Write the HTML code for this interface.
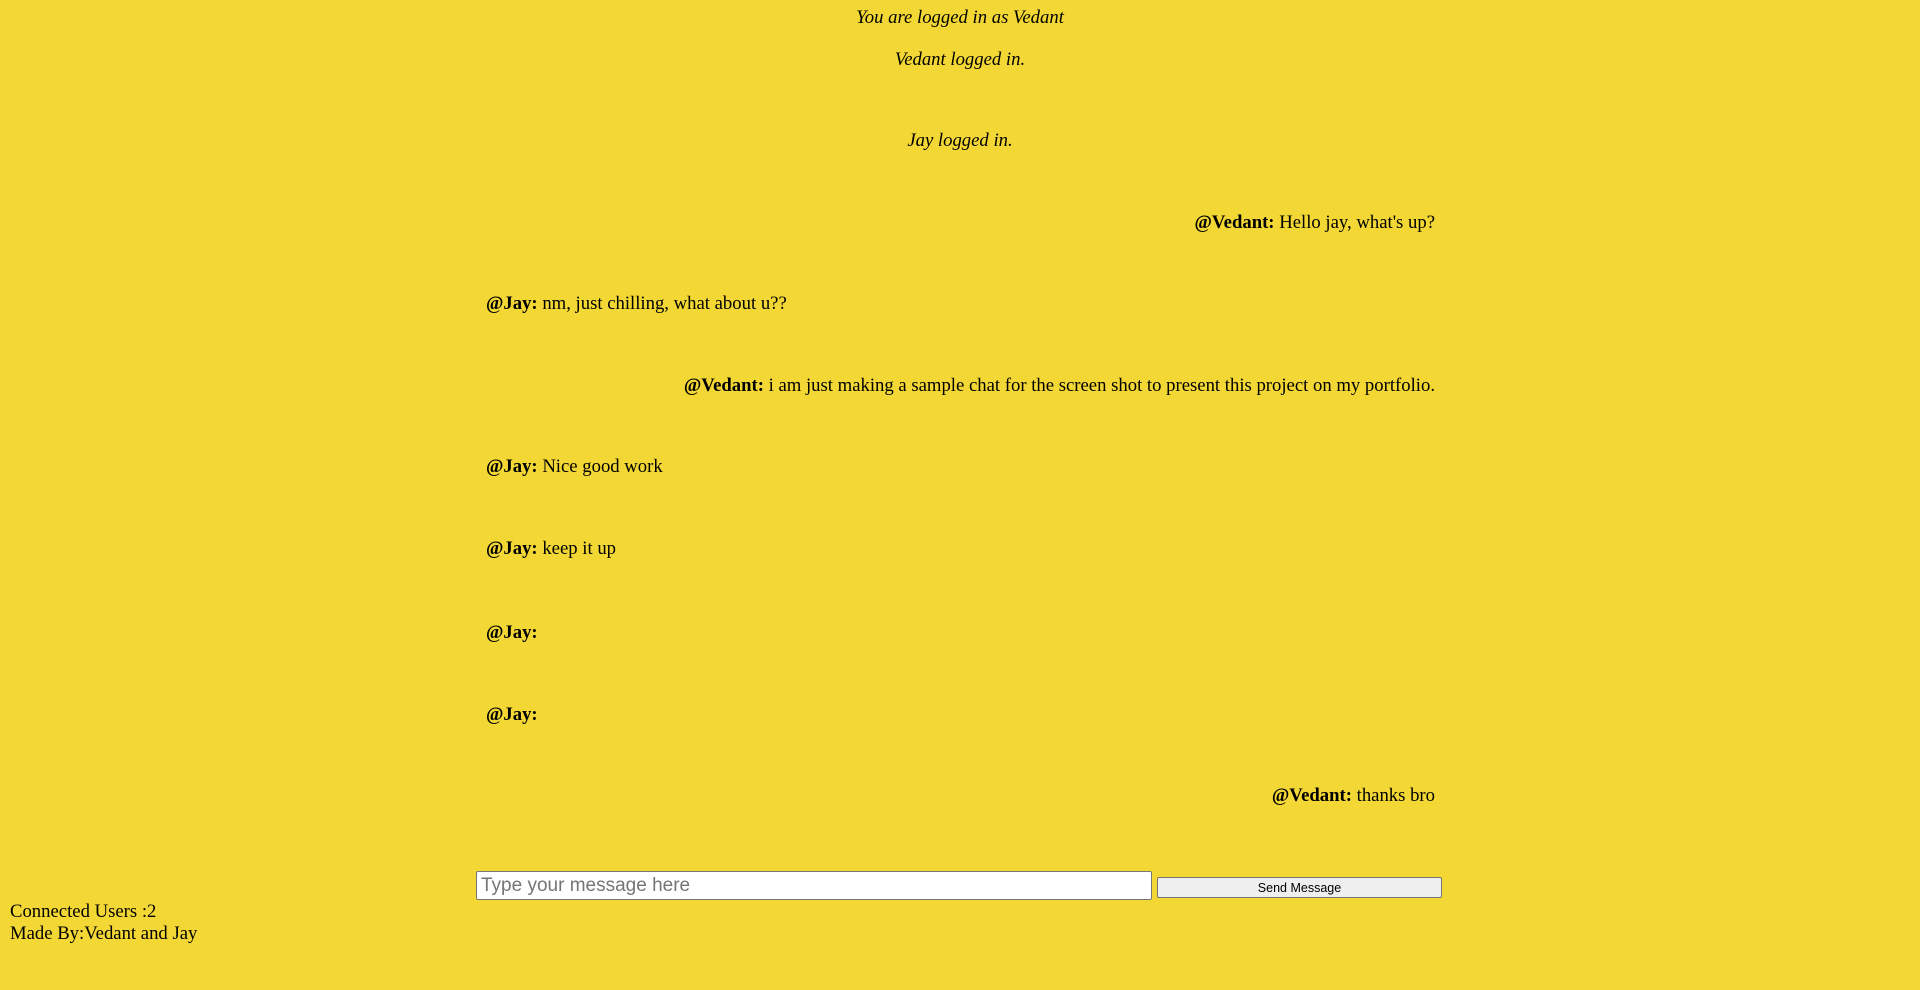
<!DOCTYPE html>
<html><head><meta charset="utf-8"><style>
body{margin:0;background:#f3d835;font-family:"Liberation Serif",serif;font-size:18.7px;color:#000;width:1920px;height:990px;overflow:hidden;position:relative}
.l{position:absolute;line-height:23px;white-space:nowrap}
.c{left:0;width:1920px;text-align:center;font-style:italic}
.r{right:485px;text-align:right}
.le{left:486px}
input{position:absolute;left:476px;top:871px;width:676px;height:29px;box-sizing:border-box;border:1px solid #767676;border-radius:2px;background:#fff;font-family:"Liberation Sans",sans-serif;font-size:19px;padding:0 4px;margin:0}
input::placeholder{color:#757575}
button{position:absolute;left:1157px;top:877px;width:285px;height:21px;box-sizing:border-box;border:1px solid #767676;border-radius:2px;background:#efefef;font-family:"Liberation Sans",sans-serif;font-size:12.5px;padding:0;margin:0;color:#000}
</style></head><body>
<div class="l c" style="top:6px">You are logged in as Vedant</div>
<div class="l c" style="top:48px">Vedant logged in.</div>
<div class="l c" style="top:129px">Jay logged in.</div>
<div class="l r" style="top:211px"><b>@Vedant:</b> Hello jay, what's up?</div>
<div class="l le" style="top:292px"><b>@Jay:</b> nm, just chilling, what about u??</div>
<div class="l r" style="top:374px"><b>@Vedant:</b> i am just making a sample chat for the screen shot to present this project on my portfolio.</div>
<div class="l le" style="top:455px"><b>@Jay:</b> Nice good work</div>
<div class="l le" style="top:537px"><b>@Jay:</b> keep it up</div>
<div class="l le" style="top:621px"><b>@Jay:</b> <span style="color:#f5c542;opacity:.6;font-size:16px">|</span></div>
<div class="l le" style="top:703px"><b>@Jay:</b></div>
<div class="l r" style="top:784px"><b>@Vedant:</b> thanks bro</div>
<input placeholder="Type your message here">
<button>Send Message</button>
<div class="l" style="left:10px;top:900px">Connected Users :2</div>
<div class="l" style="left:10px;top:922px">Made By:Vedant and Jay</div>
</body></html>
